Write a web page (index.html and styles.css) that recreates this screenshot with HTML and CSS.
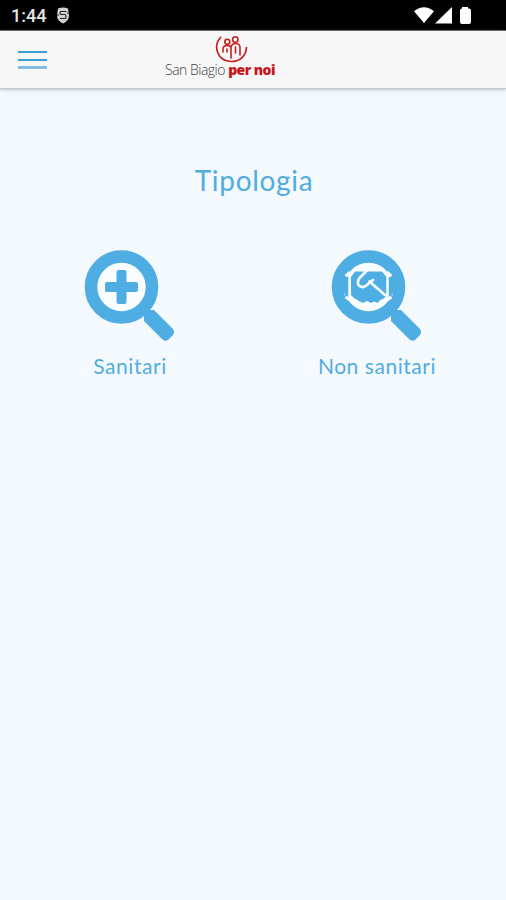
FILE: index.html
```html
<!DOCTYPE html>
<html lang="it">
<head>
<meta charset="utf-8">
<title>San Biagio per noi</title>
<link rel="stylesheet" href="styles.css">
</head>
<body>
<div class="status">
  <span class="time">1:44</span>
  <svg class="shield" width="14" height="17" viewBox="0 0 14 17"><path d="M2 1.5Q7-.5 12 1.5L13 8Q13 14 7 16.5Q1 14 1 8Z" fill="#d2d2d2"/><path d="M10.5 4.500H5Q4 4.500 4 6T5 7.500H9Q10 7.500 10 9.500T9 11.500H4M1 8H3M11 6H13" fill="none" stroke="#222" stroke-width="1.2"/></svg>
  <svg class="signals" width="60" height="18" viewBox="0 0 60 18" fill="#fff"><path d="M0 4.2Q10-3.5 20 4.2L10 16Z"/><path d="M21 16.5L38 0V16.5Z"/><path d="M48 1.5V0H54V1.5H55Q57 1.5 57 3.5V15Q57 17 55 17H48Q46 17 46 15V3.5Q46 1.5 48 1.5Z"/></svg>
</div>
<header class="bar">
  <button class="menu" aria-label="Menu"><i></i><i></i><i></i></button>
  <div class="brand">
    <svg width="34" height="29" viewBox="0 0 34 29" fill="none" stroke="#c5201f" stroke-linecap="round"><path d="M5.500 2.500C-2 11 2 26 16 26.500C26 26.500 31 20 31.500 12.500" stroke-width="1.700"/><circle cx="12.300" cy="6.800" r="2.500" stroke-width="1.600"/><circle cx="20.300" cy="4.500" r="2.700" stroke-width="1.600"/><path d="M8 17V14Q8 10.500 12.300 10.500Q16 10.500 16 14V23M16 12Q17 8.500 20.300 8.500Q25 8.500 25 12.500V20M12 14V17M20.500 12V18" stroke-width="1.600"/></svg>
    <div class="name"><span>San Biagio</span><b>per noi</b></div>
  </div>
</header>
<main>
  <h1>Tipologia</h1>
  <div class="choices">
    <a class="choice">
      <svg width="92" height="92" viewBox="0 0 92 92"><circle cx="37.5" cy="37" r="30.5" fill="#fafdff" stroke="#4eaee3" stroke-width="12.6"/><path d="M60 66V62Q64 62 65 60H70L89 79Q91 82 89 85L84 90Q81 92 78 89L60 71Z" fill="#4eaee3"/><path d="M34.5 20H40.500Q42.500 20 42.500 22V32H52Q54 32 54 34V40Q54 42 52 42H42.500V52Q42.500 54 40.500 54H34.500Q32.500 54 32.500 52V42H23Q21 42 21 40V34Q21 32 23 32H32.500V22Q32.500 20 34.500 20Z" fill="#4eaee3"/></svg>
      <span>Sanitari</span>
    </a>
    <a class="choice">
      <svg width="92" height="92" viewBox="0 0 92 92"><circle cx="37.500" cy="37" r="30.500" fill="#fafdff" stroke="#4eaee3" stroke-width="12.600"/><path d="M60 66V62Q64 62 65 60H70L89 79Q91 82 89 85L84 90Q81 92 78 89L60 71Z" fill="#4eaee3"/><path d="M12 27H17.500V47H12ZM57.500 27H63V47H57.500Z" fill="#4eaee3"/><path d="M24 21.500H51L55.500 27V46L52 49L49 50L47 53L43 51.500L40 53L36 51L32 53L28 51L23 48L20 45V27Z" fill="#4eaee3"/><path d="M14.500 26L19 22M14.500 47L19 50M60.500 26L56 22M60.500 47L56 50" stroke="#fafdff" stroke-width="3"/><path d="M18.500 25V47M56.500 25V47" stroke="#fafdff" stroke-width="2"/><path d="M36 20.500L28.500 28Q25.500 33 28 35.500Q31.500 38.500 34.500 36L42 30M38.500 31.500L54 45" fill="none" stroke="#fafdff" stroke-width="2.700" stroke-linecap="round" stroke-linejoin="round"/><path d="M13 44.500H14.500M60.500 44.500H62" stroke="#a9d9f3" stroke-width="1.500"/></svg>
      <span>Non sanitari</span>
    </a>
  </div>
</main>
</body>
</html>
```
FILE: styles.css
```css
* { box-sizing: border-box; }
body { margin: 0; min-height: 900px; background: #f4f9fd; font-family: Lato, sans-serif; color: #51ade0; }
.status { height: 31px; background: #000; border-bottom: 1px solid #555; display: flex; align-items: center; padding: 1px 32px 0 11px; }
.time { font: 500 18px/20px Roboto, sans-serif; color: #e4e4e4; width: 45px; padding-top: 1px; }
.signals { margin-left: auto; }
.bar { height: 58px; background: #f7f7f7; border-bottom: 1px solid #c3c8cc; box-shadow: 0 1px 3px #bac4cc; display: grid; grid-template-columns: 165px 110px 1fr; }
.menu { border: 0; padding: 0; background: none; width: 29px; height: 18px; margin: 20px 0 0 18px; display: flex; flex-direction: column; justify-content: space-between; }
.menu i { width: 29px; height: 2px; background: #38a2d6; }
.menu i:last-child { height: 3px; background: #81bce1; }
.brand { padding-top: 4px; }
.brand svg { display: block; margin-left: 50px; }
.name { display: flex; justify-content: space-between; margin-top: -4px; white-space: nowrap; font: 300 14px/19px "Open Sans", sans-serif; color: #444; }
.name span { letter-spacing: -0.5px; }
.name b { font-weight: 800; color: #c5161d; letter-spacing: -0.55px; }
h1 { margin: 0; padding-top: 73px; text-align: center; font-size: 28px; line-height: 36px; font-weight: 400; letter-spacing: 0.7px; text-indent: 2px; }
.choices { display: grid; grid-template-columns: 247px 247px; justify-content: center; margin-top: 52px; padding-left: 1px; }
.choice { display: flex; flex-direction: column; align-items: center; font-size: 21px; line-height: 28px; }
.choice span { margin-top: 10px; letter-spacing: 0.55px; }
```
